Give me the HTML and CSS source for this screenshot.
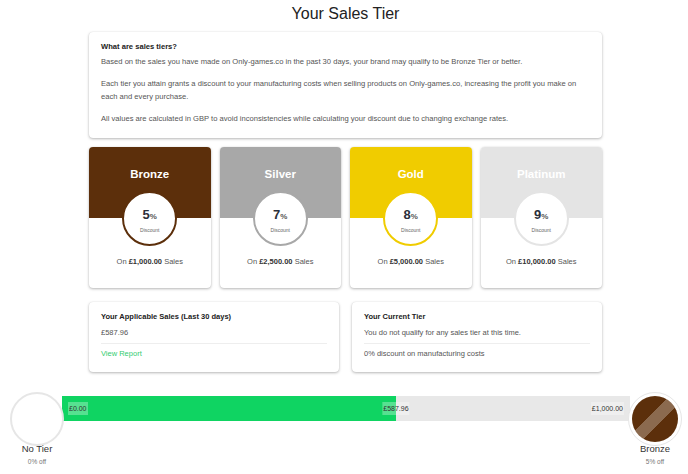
FILE: index.html
```html
<!DOCTYPE html>
<html lang="en">
<head>
    <meta charset="UTF-8">
    <meta name="viewport" content="width=device-width, initial-scale=1.0">
    <title>Your Sales Tier</title>
    <link rel="stylesheet" href="styles.css">
</head>
<body>
    <div class="page">
        <h1 class="page-title">Your Sales Tier</h1>

        <div class="card info">
            <h3>What are sales tiers?</h3>
            <p>Based on the sales you have made on Only-games.co in the past 30 days, your brand may qualify to be Bronze Tier or better.</p>
            <p>Each tier you attain grants a discount to your manufacturing costs when selling products on Only-games.co, increasing the profit you make on each and every purchase.</p>
            <p>All values are calculated in GBP to avoid inconsistencies while calculating your discount due to changing exchange rates.</p>
        </div>

        <div class="tiers">
            <div class="card tier bronze">
                <div class="tier-head">Bronze</div>
                <div class="tier-badge">
                    <div class="pct">5<span>%</span></div>
                    <div class="pct-label">Discount</div>
                </div>
                <div class="tier-sales">On <b>£1,000.00</b> Sales</div>
            </div>
            <div class="card tier silver">
                <div class="tier-head">Silver</div>
                <div class="tier-badge">
                    <div class="pct">7<span>%</span></div>
                    <div class="pct-label">Discount</div>
                </div>
                <div class="tier-sales">On <b>£2,500.00</b> Sales</div>
            </div>
            <div class="card tier gold">
                <div class="tier-head">Gold</div>
                <div class="tier-badge">
                    <div class="pct">8<span>%</span></div>
                    <div class="pct-label">Discount</div>
                </div>
                <div class="tier-sales">On <b>£5,000.00</b> Sales</div>
            </div>
            <div class="card tier platinum">
                <div class="tier-head">Platinum</div>
                <div class="tier-badge">
                    <div class="pct">9<span>%</span></div>
                    <div class="pct-label">Discount</div>
                </div>
                <div class="tier-sales">On <b>£10,000.00</b> Sales</div>
            </div>
        </div>

        <div class="summary">
            <div class="card stat">
                <h4>Your Applicable Sales (Last 30 days)</h4>
                <div class="stat-value">£587.96</div>
                <div class="stat-foot"><a href="#" class="link">View Report</a></div>
            </div>
            <div class="card stat">
                <h4>Your Current Tier</h4>
                <div class="stat-value">You do not qualify for any sales tier at this time.</div>
                <div class="stat-foot">0% discount on manufacturing costs</div>
            </div>
        </div>
    </div>

    <div class="progress">
        <div class="node">
            <div class="node-circle"></div>
            <div class="node-name">No Tier</div>
            <div class="node-off">0% off</div>
        </div>
        <div class="bar">
            <div class="bar-fill" style="width: 58.796%"></div>
            <span class="bar-label start">£0.00</span>
            <span class="bar-label current" style="left: 58.796%">£587.96</span>
            <span class="bar-label end">£1,000.00</span>
        </div>
        <div class="node">
            <div class="node-circle filled">
                <div class="medal"></div>
            </div>
            <div class="node-name">Bronze</div>
            <div class="node-off">5% off</div>
        </div>
    </div>
</body>
</html>
```

FILE: styles.css
```css
body {
    margin: 0;
    font-family: 'Liberation Sans', Arial, sans-serif;
    color: #333;
    background: #fff;
    overflow: hidden;
}

.page {
    width: 513px;
    margin: 0 86px 0 89px;
}

.page-title {
    margin: 0;
    padding-top: 4px;
    font-size: 16px;
    font-weight: normal;
    line-height: 20px;
    text-align: center;
    color: #222;
}

.card {
    background: #fff;
    border-radius: 4px;
    box-shadow: 0 1px 3px rgba(0, 0, 0, 0.28), 0 0 1px rgba(0, 0, 0, 0.12);
}

/* info box */
.info {
    margin-top: 8px;
    padding: 8px 20px 13px 12px;
    font-size: 7.6px;
    line-height: 13px;
    color: #555;
}

.info h3 {
    margin: 0 0 2px;
    font-size: 7.6px;
    color: #222;
}

.info p {
    margin: 0 0 9px;
}

.info p:last-child {
    margin-bottom: 0;
}

/* tier cards */
.tiers {
    display: grid;
    grid-template-columns: repeat(4, 1fr);
    gap: 9px;
    margin-top: 9px;
}

.tier {
    height: 141px;
    overflow: hidden;
    text-align: center;
}

.tier-head {
    height: 71px;
    box-sizing: border-box;
    padding-top: 21px;
    font-size: 11.5px;
    line-height: 13px;
    font-weight: bold;
    color: #fff;
}

.tier-badge {
    width: 55px;
    height: 55px;
    box-sizing: border-box;
    margin: -27px auto 0;
    padding-top: 14px;
    border: 2px solid #ccc;
    border-radius: 50%;
    background: #fff;
}

.pct {
    font-size: 13px;
    line-height: 16px;
    font-weight: bold;
    color: #2b2f3a;
}

.pct span {
    font-size: 8px;
    color: #555;
}

.pct-label {
    margin-top: 1px;
    font-size: 5px;
    line-height: 8px;
    color: #666;
}

.tier-sales {
    margin-top: 11px;
    font-size: 7.5px;
    line-height: 10px;
    color: #555;
}

.tier-sales b {
    color: #333;
}

.bronze .tier-head { background: #5c2f0b; }
.bronze .tier-badge { border-color: #5c2f0b; }
.silver .tier-head { background: #a8a8a8; }
.silver .tier-badge { border-color: #a8a8a8; }
.gold .tier-head { background: #f0cc00; }
.gold .tier-badge { border-color: #f0cc00; }
.platinum .tier-head { background: #e4e4e4; }
.platinum .tier-badge { border-color: #e4e4e4; }

/* summary cards */
.summary {
    display: grid;
    grid-template-columns: 1fr 1fr;
    gap: 13px;
    margin-top: 14px;
}

.stat {
    height: 70px;
    box-sizing: border-box;
    padding: 10px 12px 0;
    font-size: 7.5px;
    line-height: 10px;
    color: #555;
}

.stat h4 {
    margin: 0;
    font-size: 7.5px;
    color: #222;
}

.stat-value {
    margin-top: 6px;
    padding-bottom: 5px;
    border-bottom: 1px solid #eee;
}

.stat-foot {
    padding-top: 5px;
}

.link {
    color: #33cc70;
    text-decoration: none;
}

/* progress */
.progress {
    display: flex;
    align-items: flex-start;
    margin-top: 20px;
    padding: 0 6px 0 10px;
}

.node {
    position: relative;
    z-index: 1;
    width: 54px;
    text-align: center;
}

.node-circle {
    width: 54px;
    height: 54px;
    box-sizing: border-box;
    border: 2px solid #e6e6e6;
    border-radius: 50%;
    background: #fff;
}

.node-circle.filled {
    border-width: 1px;
    padding: 3px;
}

.medal {
    width: 100%;
    height: 100%;
    border-radius: 50%;
    background: linear-gradient(135deg, #5c2f0b 41%, #8b6a4f 41%, #8b6a4f 59%, #5c2f0b 59%);
}

.node-name {
    margin-top: -3px;
    font-size: 9.5px;
    line-height: 11px;
    color: #333;
}

.node-off {
    margin-top: 3px;
    font-size: 6.5px;
    line-height: 9px;
    color: #777;
}

.bar {
    position: relative;
    flex: 1;
    height: 25px;
    margin: 4px -2px 0;
    background: #e8e8e8;
}

.bar-fill {
    height: 100%;
    background: #0fd462;
}

.bar-label {
    position: absolute;
    top: 6px;
    padding: 1px 1px;
    font-size: 7px;
    line-height: 11px;
    color: #333;
    background: rgba(255, 255, 255, 0.3);
}

.bar-label.start {
    left: 6px;
}

.bar-label.current {
    transform: translateX(-50%);
}

.bar-label.end {
    right: 6px;
}
```
